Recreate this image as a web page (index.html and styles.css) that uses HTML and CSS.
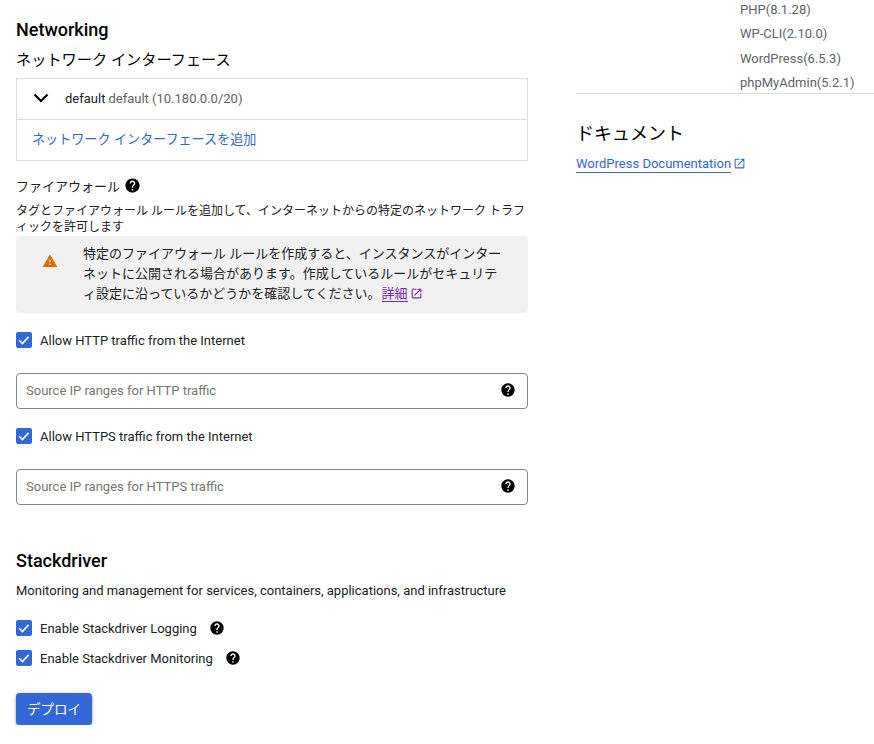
FILE: index.html

```html
<!DOCTYPE html>
<html lang="ja">
<head>
  <meta charset="UTF-8">
  <title>Deploy</title>
  <link rel="stylesheet" href="styles.css">
</head>
<body>
  <svg class="defs" width="0" height="0">
    <symbol id="help" viewBox="0 0 24 24"><path d="M12 2C6.48 2 2 6.48 2 12s4.48 10 10 10 10-4.48 10-10S17.52 2 12 2zm1 17h-2v-2h2v2zm2.07-7.75l-.9.92C13.45 12.9 13 13.5 13 15h-2v-.5c0-1.1.45-2.1 1.17-2.83l1.24-1.26c.37-.36.59-.86.59-1.41 0-1.1-.9-2-2-2s-2 .9-2 2H8c0-2.21 1.79-4 4-4s4 1.79 4 4c0 .88-.36 1.68-.93 2.25z"/></symbol>
    <symbol id="launch" viewBox="0 0 24 24"><path d="M19 19H5V5h7V3H5a2 2 0 0 0-2 2v14a2 2 0 0 0 2 2h14c1.1 0 2-.9 2-2v-7h-2v7zM14 3v2h3.59l-9.83 9.83 1.41 1.41L19 6.41V10h2V3h-7z"/></symbol>
    <symbol id="check" viewBox="0 0 16 16"><path d="M3.2 8.3l3.2 3.2 6.2-6.6" fill="none" stroke="#fff" stroke-width="1.6"/></symbol>
  </svg>

  <div class="page">
    <main class="left">
      <h2 class="section-title">Networking</h2>
      <h3 class="sub-title">ネットワーク インターフェース</h3>

      <div class="nic-box">
        <div class="nic-row">
          <svg class="chevron" viewBox="0 0 16 10" width="16" height="10"><path d="M1.5 1.5L8 8l6.5-6.5" fill="none" stroke="#000" stroke-width="2.2"/></svg>
          <span class="nic-name">default</span>
          <span class="nic-detail">default (10.180.0.0/20)</span>
        </div>
        <div class="nic-add"><a href="#">ネットワーク インターフェースを追加</a></div>
      </div>

      <div class="fw-title">ファイアウォール <svg class="help"><use href="#help"/></svg></div>
      <p class="fw-desc">タグとファイアウォール ルールを追加して、インターネットからの特定のネットワーク トラフィックを許可します</p>

      <div class="notice">
        <svg class="warn" viewBox="0 0 24 24" width="16" height="16"><path fill="#e06c00" d="M1 21h22L12 2 1 21zm12-3h-2v-2h2v2zm0-4h-2v-4h2v4z"/></svg>
        <p>特定のファイアウォール ルールを作成すると、インスタンスがインターネットに公開される場合があります。作成しているルールがセキュリティ設定に沿っているかどうかを確認してください。<a href="#" class="visited">詳細</a><svg class="ext ext-visited"><use href="#launch"/></svg></p>
      </div>

      <label class="check first"><span class="box"><svg><use href="#check"/></svg></span>Allow HTTP traffic from the Internet</label>
      <div class="field"><span>Source IP ranges for HTTP traffic</span><svg class="help"><use href="#help"/></svg></div>

      <label class="check"><span class="box"><svg><use href="#check"/></svg></span>Allow HTTPS traffic from the Internet</label>
      <div class="field"><span>Source IP ranges for HTTPS traffic</span><svg class="help"><use href="#help"/></svg></div>

      <h2 class="section-title stack">Stackdriver</h2>
      <p class="stack-desc">Monitoring and management for services, containers, applications, and infrastructure</p>

      <label class="check opt"><span class="box"><svg><use href="#check"/></svg></span>Enable Stackdriver Logging<svg class="help"><use href="#help"/></svg></label>
      <label class="check opt"><span class="box"><svg><use href="#check"/></svg></span>Enable Stackdriver Monitoring<svg class="help"><use href="#help"/></svg></label>

      <button class="deploy">デプロイ</button>
    </main>

    <aside class="right">
      <ul class="versions">
        <li>PHP(8.1.28)</li>
        <li>WP-CLI(2.10.0)</li>
        <li>WordPress(6.5.3)</li>
        <li>phpMyAdmin(5.2.1)</li>
      </ul>
      <h3 class="doc-title">ドキュメント</h3>
      <a href="#" class="doc-link">WordPress Documentation</a><svg class="ext"><use href="#launch"/></svg>
    </aside>
  </div>
</body>
</html>
```

FILE: styles.css

```css
body {
  margin: 0;
  background-color: #fff;
  color: #202124;
  font-family: Roboto, "Noto Sans CJK JP", sans-serif;
  font-size: 13px;
}

.defs {
  display: block;
  height: 0;
}

.page {
  display: flex;
  align-items: flex-start;
  gap: 48px;
  padding-left: 16px;
}

.left {
  width: 512px;
  flex-shrink: 0;
}

.right {
  flex: 1;
}

a {
  color: #3367d6;
  text-decoration: none;
}

.section-title {
  margin: 0;
  padding-top: 19px;
  font-size: 18px;
  font-weight: 500;
  line-height: 22px;
  color: #000;
}

.sub-title {
  margin: 9px 0 0;
  font-size: 15.2px;
  font-weight: 400;
  line-height: 20px;
  color: #000;
}

.nic-box {
  margin-top: 8px;
  border: 1px solid #dadce0;
}

.nic-row {
  display: flex;
  align-items: center;
  box-sizing: border-box;
  height: 41px;
  padding-bottom: 2px;
  border-bottom: 1px solid #dadce0;
}

.chevron {
  margin-left: 16px;
  margin-right: 16px;
}

.nic-name {
  color: #202124;
  margin-right: 3px;
}

.nic-detail {
  color: #5f6368;
}

.nic-add {
  height: 40px;
  line-height: 40px;
  padding-left: 15px;
  font-size: 13.1px;
}

.fw-title {
  display: flex;
  align-items: center;
  gap: 4px;
  margin-top: 14px;
  height: 20px;
  font-size: 13px;
  color: #202124;
}

.help {
  width: 16px;
  height: 16px;
  flex-shrink: 0;
  fill: #000;
}

.fw-title .help {
  width: 17px;
  height: 17px;
}

.fw-desc {
  margin: 8px 0 0;
  font-size: 12px;
  line-height: 16px;
  line-break: anywhere;
  color: #202124;
}

.notice {
  display: flex;
  align-items: flex-start;
  margin-top: 1px;
  height: 77px;
  box-sizing: border-box;
  background-color: #f1f1f1;
  border-radius: 4px;
  padding: 8px 20px 0 26px;
}

.warn {
  margin-top: 9px;
  flex-shrink: 0;
}

.notice p {
  margin: 0 0 0 25px;
  font-size: 13px;
  line-height: 20px;
  line-break: anywhere;
  color: #202124;
}

.visited {
  margin-left: 1px;
  color: #7627bb;
  border-bottom: 1px solid #7627bb;
}

.ext {
  width: 13px;
  height: 13px;
  margin-left: 2px;
  fill: #3367d6;
  vertical-align: -2px;
}

.ext-visited {
  fill: #7627bb;
}

.check {
  display: flex;
  align-items: center;
  height: 16px;
  color: #202124;
}

.check.first {
  margin-top: 19px;
}

.box {
  width: 16px;
  height: 16px;
  margin-right: 8px;
  border-radius: 2px;
  background-color: #3367d6;
}

.box svg {
  display: block;
  width: 16px;
  height: 16px;
}

.field {
  display: flex;
  align-items: center;
  justify-content: space-between;
  box-sizing: border-box;
  height: 36px;
  margin: 25px 0 19px;
  padding: 0 11px 2px 9px;
  border: 1px solid #80868b;
  border-radius: 4px;
  color: #757575;
}

.section-title.stack {
  padding-top: 26px;
}

.stack-desc {
  margin: 10px 0 0;
  line-height: 18px;
  color: #202124;
}

.check.opt {
  margin-top: 14px;
}

.check.opt .help {
  margin-left: 12px;
}

.stack-desc + .check.opt {
  margin-top: 20px;
}

.deploy {
  display: block;
  width: 76px;
  height: 32px;
  margin-top: 27px;
  padding: 0 0 3px;
  border: 0;
  border-radius: 4px;
  background-color: #3367d6;
  box-shadow: 0 1px 3px rgba(60, 64, 67, 0.6);
  color: #fff;
  font-family: inherit;
  font-size: 13.5px;
}

.versions {
  list-style: none;
  margin: -2px 0 0;
  padding: 0 0 0 164px;
  height: 95px;
  border-bottom: 1px solid #dadce0;
  color: #5f6368;
  line-height: 24.4px;
}

.doc-title {
  margin: 27px 0 0;
  font-size: 18px;
  font-weight: 400;
  line-height: 26px;
  color: #000;
}

.doc-link {
  display: inline-block;
  margin-top: 9px;
  line-height: 16px;
  border-bottom: 1px solid #3367d6;
}
```
